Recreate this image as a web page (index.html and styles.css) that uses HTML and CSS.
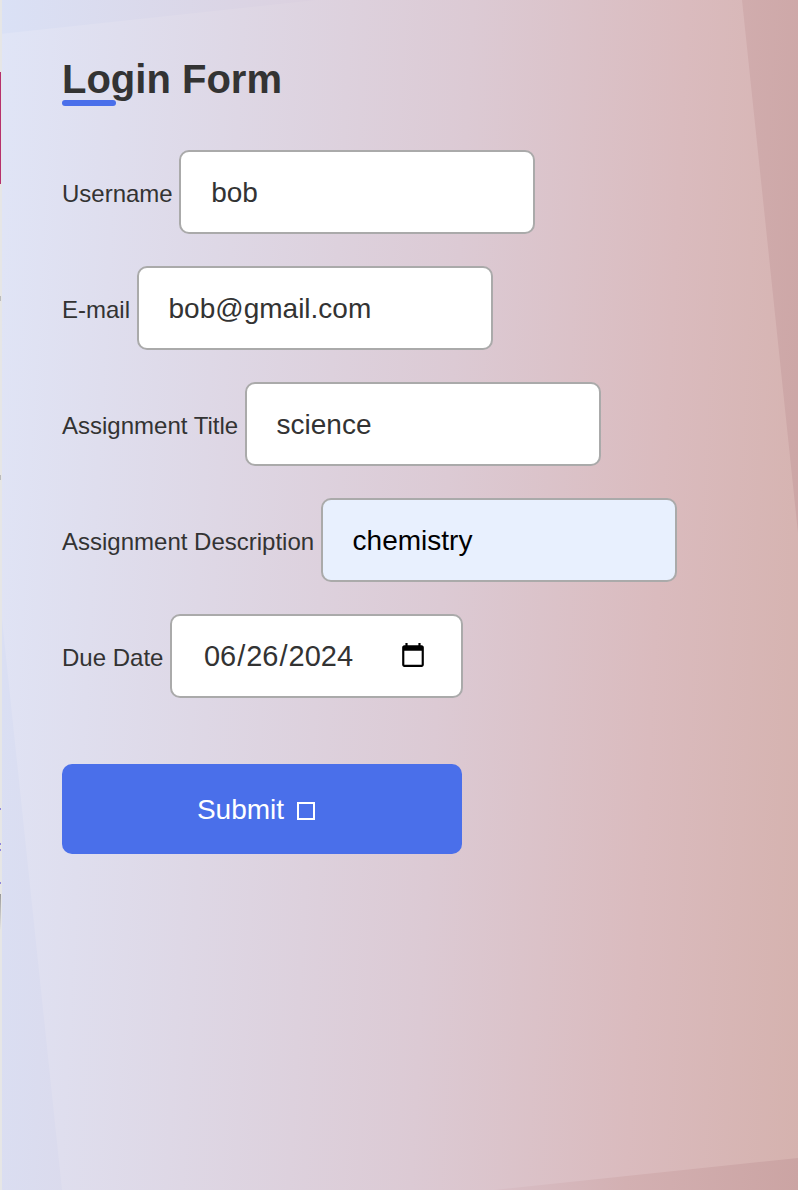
FILE: index.html
```html
<!DOCTYPE html>
<html lang="en">
<head>
    <meta charset="UTF-8">
    <meta name="viewport" content="width=device-width, initial-scale=1.0">
    <title>Login Form</title>
    <link rel="stylesheet" href="styles.css">
</head>
<body>
    <div class="edge-strip">
        <span class="edge-mark edge-mark-main"></span>
        <span class="edge-mark edge-mark-grey tick-1"></span>
        <span class="edge-mark edge-mark-grey tick-2"></span>
        <span class="edge-mark edge-mark-dot dot-1"></span>
        <span class="edge-mark edge-mark-dot dot-2"></span>
        <span class="edge-mark edge-mark-dot dot-3"></span>
        <span class="edge-mark edge-mark-dot dot-4"></span>
        <span class="edge-mark edge-mark-fade"></span>
    </div>
    <div class="panel"></div>

    <main class="content">
        <h1 class="form-title">Login Form</h1>

        <form class="login-form">
            <div class="form-row">
                <label for="username">Username</label>
                <input type="text" id="username" class="field" value="bob">
            </div>
            <div class="form-row">
                <label for="email">E-mail</label>
                <input type="text" id="email" class="field" value="bob@gmail.com">
            </div>
            <div class="form-row">
                <label for="title">Assignment Title</label>
                <input type="text" id="title" class="field" value="science">
            </div>
            <div class="form-row">
                <label for="description">Assignment Description</label>
                <input type="text" id="description" class="field field-autofill" value="chemistry">
            </div>
            <div class="form-row">
                <label for="due">Due Date</label>
                <input type="date" id="due" class="field field-date" value="2024-06-26">
            </div>
            <button type="button" class="btn">Submit<span class="btn-icon"></span></button>
        </form>
    </main>
</body>
</html>
```

FILE: styles.css
```css
/* General Styles */
* {
    margin: 0;
    padding: 0;
    box-sizing: border-box;
}

html,
body {
    height: 100%;
}

body {
    position: relative;
    overflow: hidden;
    font-family: 'Liberation Sans', Arial, sans-serif;
    color: #333;
    background: linear-gradient(93deg, #dae1f6, #dcc8d3 55%, #d3b0b2 80%, #cba4a3);
}

/* Tilted sheet behind the form */
.panel {
    position: absolute;
    inset: 0;
    background: linear-gradient(93deg, #e0e5f7, #dccad4 55%, #dabbbe 80%, #d5b2ae);
    clip-path: polygon(0 34px, 316px 0, 742px 0, 798px 533px, 798px 1158px, 494px 1190px, 62px 1190px, 0 600px);
}

/* Sliver of the page behind, at the left edge */
.edge-strip {
    position: absolute;
    left: 0;
    top: 0;
    z-index: 1;
    width: 2px;
    height: 100%;
    background: #e6e6e6;
}

.edge-mark {
    position: absolute;
    left: 0;
    width: 1px;
}

.edge-mark-main {
    top: 72px;
    height: 112px;
    background: #b5306f;
}

.edge-mark-grey {
    height: 5px;
    background: #bbb;
}

.tick-1 {
    top: 296px;
}

.tick-2 {
    top: 475px;
}

.edge-mark-dot {
    height: 2px;
    background: #8f86dc;
}

.dot-1 {
    top: 808px;
}

.dot-2 {
    top: 843px;
}

.dot-3 {
    top: 849px;
}

.dot-4 {
    top: 882px;
}

.edge-mark-fade {
    top: 894px;
    height: 36px;
    background: linear-gradient(#999, #e6e6e6);
}

.content {
    position: relative;
    z-index: 2;
    padding: 54px 0 0 62px;
}

.form-title {
    position: relative;
    font-size: 40px;
    line-height: 50px;
    font-weight: 700;
    margin-bottom: 46px;
}

.form-title::after {
    content: "";
    position: absolute;
    left: 0;
    bottom: -2px;
    width: 54px;
    height: 6px;
    border-radius: 3px;
    background: #4a6fea;
}

.login-form {
    display: flex;
    flex-direction: column;
    align-items: flex-start;
}

.form-row {
    display: flex;
    align-items: center;
    gap: 6.5px;
    margin-bottom: 32px;
}

.form-row label {
    padding-top: 4px;
    font-size: 24px;
}

.field {
    width: 356px;
    height: 84px;
    padding: 2px 30px 0;
    border: 2px solid #aaa;
    border-radius: 10px;
    background: #fff;
    color: #333;
    font-family: inherit;
    font-size: 28px;
}

.field-autofill {
    background: #e8f0fe;
    color: #000;
}

.field-date {
    width: 293px;
    padding: 0 30px 0 31px;
    font-size: 29px;
}

.field-date::-webkit-calendar-picker-indicator {
    width: 28px;
    height: 28px;
    padding: 0;
    margin: 0 4px 0 0;
}

.btn {
    width: 400px;
    height: 90px;
    margin-top: 34px;
    padding: 2px 12px 0 0;
    border: none;
    border-radius: 10px;
    background: #4a6fea;
    color: #fff;
    font-family: inherit;
    font-size: 28px;
    cursor: pointer;
}

.btn-icon {
    display: inline-block;
    width: 18px;
    height: 18px;
    margin-left: 13px;
    border: 2px solid #fff;
    vertical-align: -1px;
}
```
